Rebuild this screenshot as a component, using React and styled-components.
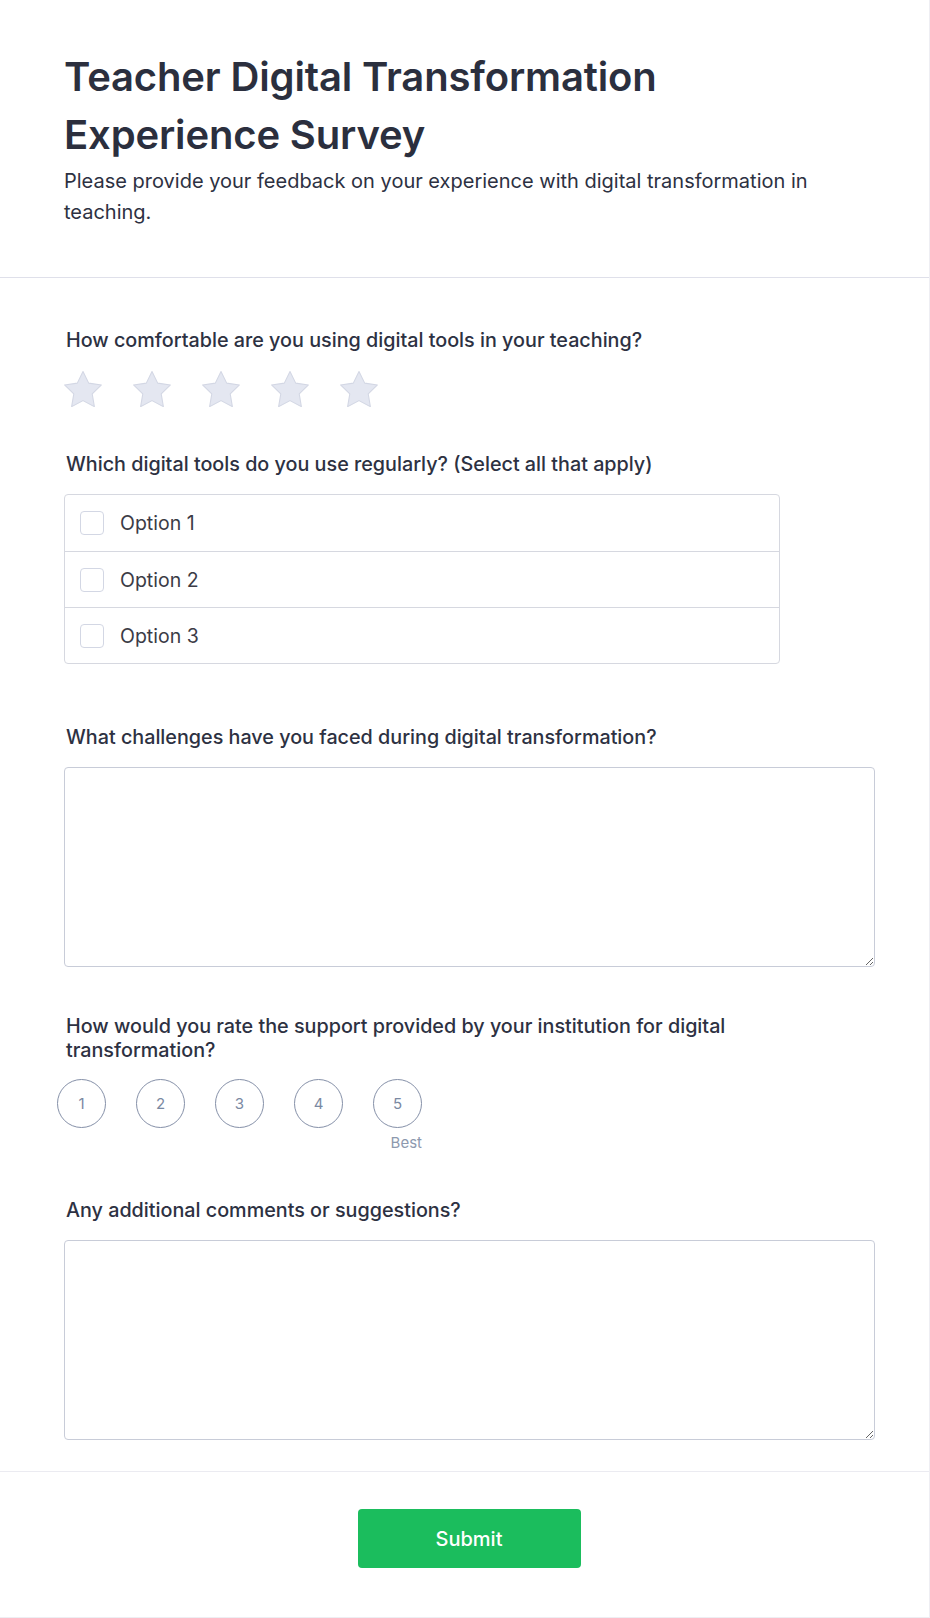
import React from "react";
import styled, { createGlobalStyle } from "styled-components";

const Global = createGlobalStyle`
  html, body { margin: 0; padding: 0; background: #ffffff; }
  body { font-family: Inter, "Noto Sans", sans-serif; color: #2d3142; }
  * { box-sizing: border-box; }
`;

const Card = styled.div`
  width: 930px;
  min-height: 1618px;
  background: #fff;
  border-right: 1px solid #eeeef3;
  border-bottom: 1px solid #eeeef3;
  display: flex;
  flex-direction: column;
`;

const Header = styled.header`
  padding: 48px 55px 49px 64px;
  border-bottom: 1px solid #dfe0ea;
`;

const Title = styled.h1`
  margin: 0;
  font-size: 40px;
  line-height: 58px;
  font-weight: 600;
  color: #2b2f3e;
  max-width: 700px;
  letter-spacing: -0.15px;
`;

const Subtitle = styled.p`
  margin: 2px 0 0;
  font-size: 20px;
  line-height: 31px;
  font-weight: 400;
  color: #2d3142;
`;

const Body = styled.main`
  padding: 50px 55px 31px 64px;
  display: flex;
  flex-direction: column;
`;

const Question = styled.section`
  display: flex;
  flex-direction: column;
  gap: 18px;
  margin-top: ${(p) => p.$top || 0}px;
`;

const Label = styled.div`
  font-size: 19.75px;
  line-height: 24px;
  font-weight: 500;
  color: #2d3142;
  padding-left: 2px;
  max-width: ${(p) => p.$max || 811}px;
`;

const Stars = styled.div`
  display: flex;
  gap: 31px;
  margin-top: 1px;
`;

const StarButton = styled.button`
  border: 0;
  padding: 0;
  background: none;
  width: 38px;
  height: 36px;
  display: flex;
  cursor: pointer;
`;

const Options = styled.div`
  width: 716px;
  border: 1px solid #d6d8e0;
  border-radius: 4px;
  display: flex;
  flex-direction: column;
`;

const OptionRow = styled.label`
  height: 56px;
  display: flex;
  align-items: center;
  gap: 16px;
  padding: 0 15px;
  font-size: 19.5px;
  color: #3b3b46;
  border-top: ${(p) => (p.$first ? "none" : "1px solid #d6d8e0")};
`;

const Box = styled.span`
  width: 24px;
  height: 24px;
  border: 1px solid #d3d7e4;
  border-radius: 4px;
  background: #fff;
`;

const TextArea = styled.textarea`
  width: 811px;
  height: 200px;
  border: 1px solid #c8ccd8;
  border-radius: 4px;
  padding: 12px;
  font-family: inherit;
  font-size: 16px;
  resize: vertical;
  outline: none;
`;

const Scale = styled.div`
  display: grid;
  grid-template-columns: repeat(5, 49px);
  column-gap: 30px;
  row-gap: 4px;
  margin-left: -7px;
  margin-top: -1px;
`;

const Circle = styled.button`
  width: 49px;
  height: 49px;
  border-radius: 50%;
  border: 1px solid #8590a8;
  background: #fff;
  color: #7a89a2;
  font-family: Inter, "Noto Sans", sans-serif;
  font-size: 15px;
  padding: 0;
  display: flex;
  align-items: center;
  justify-content: center;
`;

const Caption = styled.span`
  grid-column: 5;
  justify-self: end;
  font-size: 15px;
  line-height: 22px;
  color: #8d99ae;
`;

const Footer = styled.footer`
  border-top: 1px solid #ebebf1;
  padding: 37px 55px 49px 64px;
  display: flex;
  justify-content: center;
`;

const Submit = styled.button`
  width: 223px;
  height: 59px;
  border: 0;
  border-radius: 4px;
  background: #1bbd5d;
  color: #fff;
  font-family: Inter, "Noto Sans", sans-serif;
  font-size: 20px;
  font-weight: 500;
  cursor: pointer;
`;

const Star = () => (
  <svg width="38" height="36" viewBox="2.2 2.2 19.6 18.6">
    <path
      d="M12 2.5l2.94 5.96 6.58.96-4.76 4.64 1.12 6.55L12 17.52l-5.88 3.09 1.12-6.55L2.48 9.42l6.58-.96L12 2.5z"
      fill="#e4e7f1"
      stroke="#d3d7e4"
      strokeWidth="0.55"
      strokeLinejoin="round"
    />
  </svg>
);

export default function App() {
  return (
    <>
      <Global />
      <Card>
        <Header>
          <Title>Teacher Digital Transformation Experience Survey</Title>
          <Subtitle>
            Please provide your feedback on your experience with digital transformation in teaching.
          </Subtitle>
        </Header>
        <Body>
          <Question>
            <Label>How comfortable are you using digital tools in your teaching?</Label>
            <Stars>
              {[1, 2, 3, 4, 5].map((n) => (
                <StarButton key={n} aria-label={`${n} stars`}>
                  <Star />
                </StarButton>
              ))}
            </Stars>
          </Question>
          <Question $top={45}>
            <Label>Which digital tools do you use regularly? (Select all that apply)</Label>
            <Options>
              {["Option 1", "Option 2", "Option 3"].map((o, i) => (
                <OptionRow key={o} $first={i === 0}>
                  <Box />
                  {o}
                </OptionRow>
              ))}
            </Options>
          </Question>
          <Question $top={61}>
            <Label>What challenges have you faced during digital transformation?</Label>
            <TextArea />
          </Question>
          <Question $top={47}>
            <Label $max={716}>
              How would you rate the support provided by your institution for digital transformation?
            </Label>
            <Scale>
              {[1, 2, 3, 4, 5].map((n) => (
                <Circle key={n}>{n}</Circle>
              ))}
              <Caption>Best</Caption>
            </Scale>
          </Question>
          <Question $top={44}>
            <Label>Any additional comments or suggestions?</Label>
            <TextArea />
          </Question>
        </Body>
        <Footer>
          <Submit>Submit</Submit>
        </Footer>
      </Card>
    </>
  );
}
